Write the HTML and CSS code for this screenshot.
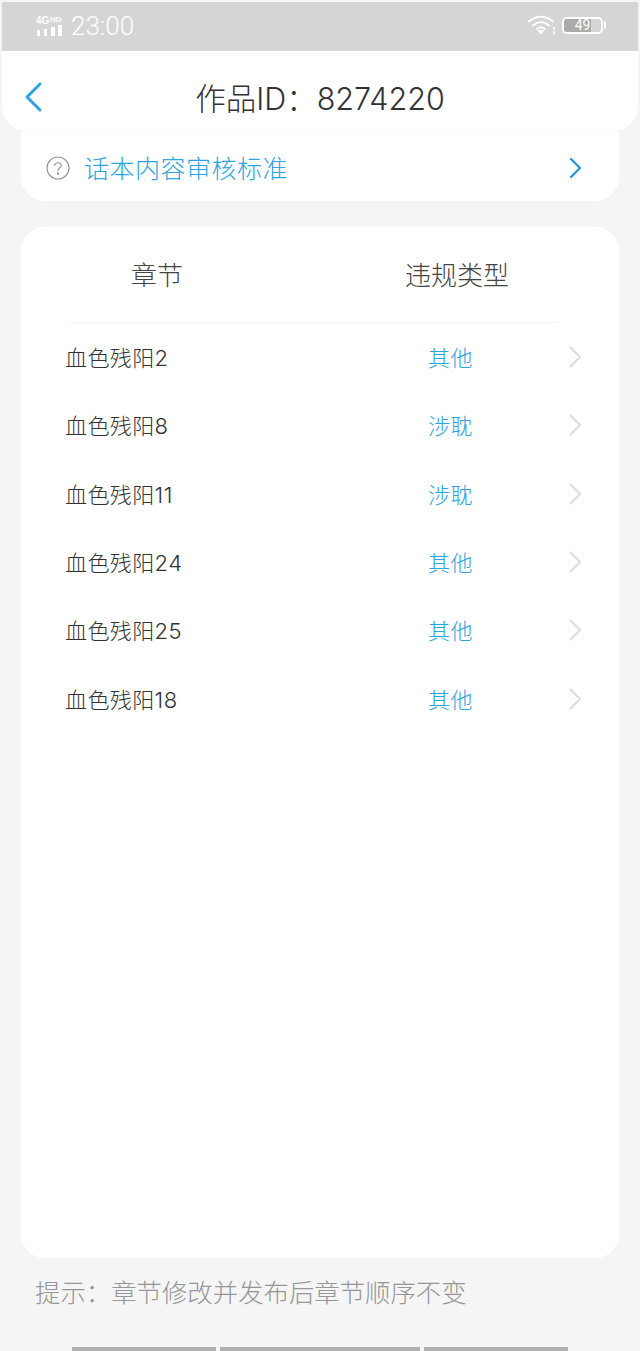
FILE: index.html
```html
<!DOCTYPE html>
<html lang="zh-CN">
<head>
<meta charset="utf-8">
<title>作品ID</title>
<link rel="stylesheet" href="styles.css">
</head>
<body>
<div class="screen">
  <header class="head">
    <div class="status">
      <div class="status-left">
        <svg class="signal" width="28" height="24" viewBox="0 0 28 24">
          <text x="0" y="10" class="net">4G</text>
          <text x="14" y="8" class="net small">HD</text>
          <rect x="1" y="16" width="3" height="6" fill="#fff"/>
          <rect x="8" y="15" width="3" height="7" fill="#fff"/>
          <rect x="15" y="13" width="4" height="9" fill="#fff"/>
          <rect x="22" y="11" width="4" height="11" fill="#fff"/>
        </svg>
        <span class="time">23:00</span>
      </div>
      <div class="status-right">
        <svg class="wifi" width="30" height="22" viewBox="0 0 30 22" fill="none" stroke="#fff" stroke-width="2" stroke-linecap="round">
          <path d="M2 7.5C9 1 19 1 26 7.5"/>
          <path d="M6 11.5C11 7 17 7 22 11.5"/>
          <path d="M10 15C12.5 13 15.5 13 18 15"/>
          <path d="M11.5 17L14 20L16.5 17Z" fill="#fff" stroke-width="1"/>
          <path d="M27 13.5V15.5M27 18V20" stroke-width="1.6"/>
        </svg>
        <div class="battery"><span class="level"></span><span class="pct">49</span></div>
        <span class="cap"></span>
      </div>
    </div>
    <div class="nav">
      <svg class="back" width="20" height="32" viewBox="0 0 20 32" fill="none" stroke="#2ea3e6" stroke-width="3" stroke-linecap="round" stroke-linejoin="round">
        <path d="M16 3L3 16L16 29"/>
      </svg>
      <h1 class="title">作品ID：8274220</h1>
    </div>
  </header>

  <div class="link-card">
    <svg class="help" width="24" height="24" viewBox="0 0 24 24" fill="none" stroke="#999" stroke-width="1.2">
      <circle cx="12" cy="12" r="11"/>
      <path d="M8.8 9.5C8.8 5.8 15.2 5.8 15.2 9.5C15.2 11.8 12 11.8 12 14.5" stroke-linecap="round"/>
      <circle cx="12" cy="17.5" r="0.6" fill="#999"/>
    </svg>
    <span class="link-text">话本内容审核标准</span>
    <svg class="link-arrow" width="13" height="22" viewBox="0 0 13 22" fill="none" stroke="#2b96d8" stroke-width="2.4" stroke-linecap="round" stroke-linejoin="round">
      <path d="M2 2L11 11L2 20"/>
    </svg>
  </div>

  <section class="table-card">
    <div class="table-head">
      <span class="th-chapter">章节</span>
      <span class="th-type">违规类型</span>
    </div>
    <ul class="rows">
      <li class="row"><span class="chapter">血色残阳2</span><span class="type">其他</span><svg class="chev" width="14" height="24" viewBox="0 0 14 24" fill="none" stroke="#dcdcdc" stroke-width="2"><path d="M2 2L12 12L2 22"/></svg></li>
      <li class="row"><span class="chapter">血色残阳8</span><span class="type">涉耽</span><svg class="chev" width="14" height="24" viewBox="0 0 14 24" fill="none" stroke="#dcdcdc" stroke-width="2"><path d="M2 2L12 12L2 22"/></svg></li>
      <li class="row"><span class="chapter">血色残阳11</span><span class="type">涉耽</span><svg class="chev" width="14" height="24" viewBox="0 0 14 24" fill="none" stroke="#dcdcdc" stroke-width="2"><path d="M2 2L12 12L2 22"/></svg></li>
      <li class="row"><span class="chapter">血色残阳24</span><span class="type">其他</span><svg class="chev" width="14" height="24" viewBox="0 0 14 24" fill="none" stroke="#dcdcdc" stroke-width="2"><path d="M2 2L12 12L2 22"/></svg></li>
      <li class="row"><span class="chapter">血色残阳25</span><span class="type">其他</span><svg class="chev" width="14" height="24" viewBox="0 0 14 24" fill="none" stroke="#dcdcdc" stroke-width="2"><path d="M2 2L12 12L2 22"/></svg></li>
      <li class="row"><span class="chapter">血色残阳18</span><span class="type">其他</span><svg class="chev" width="14" height="24" viewBox="0 0 14 24" fill="none" stroke="#dcdcdc" stroke-width="2"><path d="M2 2L12 12L2 22"/></svg></li>
    </ul>
  </section>

  <p class="hint">提示：章节修改并发布后章节顺序不变</p>

  <div class="bottom-bars">
    <span class="bar bar-side"></span>
    <span class="bar bar-mid"></span>
    <span class="bar bar-side"></span>
  </div>
</div>
</body>
</html>
```

FILE: styles.css
```css
* { box-sizing: border-box; }
html, body { margin: 0; padding: 0; }
body {
  background: #f5f5f5;
  font-family: Inter, "Noto Sans CJK SC", "Liberation Sans", sans-serif;
  font-weight: 300;
}
.screen {
  width: 640px;
  height: 1351px;
  overflow: hidden;
  display: flex;
  flex-direction: column;
}
.head {
  margin: 2px 2px 0 2px;
  height: 129px;
  flex: none;
  background: #fff;
  border-radius: 0 0 24px 24px;
  box-shadow: 0 1px 2px rgba(0, 0, 0, .03);
  overflow: hidden;
  position: relative;
  z-index: 1;
}
.status {
  height: 49px;
  background: #d5d5d5;
  display: flex;
  justify-content: space-between;
  align-items: center;
  padding: 0 32px 0 34px;
}
.status-left, .status-right { display: flex; align-items: center; }
.signal { margin-top: -2px; }
.net { font: 700 10px "Liberation Sans", sans-serif; fill: #fff; }
.net.small { font-size: 8px; }
.time {
  margin: -1px 0 0 7px;
  font: 300 26px/1 Roboto, sans-serif;
  color: #fff;
}
.status-right { margin-top: -3px; }
.wifi { margin-right: 5px; }
.battery {
  width: 41px;
  height: 17px;
  border: 2px solid #fff;
  border-radius: 5px;
  position: relative;
  overflow: hidden;
}
.level { display: block; width: 72%; height: 100%; background: #ababab; }
.pct {
  position: absolute;
  inset: 0;
  text-align: center;
  font: 400 14px/13px Roboto, sans-serif;
  color: #fff;
}
.cap { width: 2px; height: 8px; margin-left: 1px; background: #fff; border-radius: 0 2px 2px 0; }
.nav {
  height: 80px;
  display: flex;
  align-items: center;
  justify-content: center;
  position: relative;
}
.back { position: absolute; left: 22px; top: 30px; }
.title {
  margin: 16px 0 0 0;
  font-size: 30.5px;
  font-weight: 300;
  line-height: 40px;
  color: #333;
  white-space: nowrap;
}
.link-card {
  margin: 0 21px;
  height: 70px;
  flex: none;
  background: #fff;
  border-radius: 0 0 24px 24px;
  display: flex;
  align-items: center;
  padding: 4px 37px 0 25px;
}
.help { flex: none; }
.link-text {
  margin: 2px 0 0 14px;
  font-size: 25px;
  line-height: 34px;
  letter-spacing: .5px;
  color: #2ea3e0;
  flex: 1;
}
.table-card {
  margin: 26px 21px 0;
  height: 1031px;
  flex: none;
  background: #fff;
  border-radius: 24px;
}
.table-head {
  margin: 0 60px 0 48px;
  height: 96px;
  border-bottom: 1px solid #f5f5f5;
  display: flex;
  align-items: center;
  padding: 0 0 0 62px;
  font-size: 26px;
  line-height: 34px;
  color: #444;
}
.th-chapter { width: 274px; margin-top: 2px; }
.th-type { margin-top: 2px; white-space: nowrap; }
.rows { list-style: none; margin: 0; padding: 0; }
.row {
  height: 68.3px;
  display: flex;
  align-items: center;
  padding: 0 0 0 44px;
  font-size: 22px;
  line-height: 30px;
  letter-spacing: .4px;
}
.chapter { width: 363px; margin-top: 2px; color: #333; }
.type { width: 140px; margin-top: 2px; color: #2ea3e0; }
.chev { flex: none; }
.hint {
  margin: 17px 0 0 35px;
  font-size: 25.4px;
  line-height: 36px;
  color: #969696;
}
.bottom-bars {
  margin-top: 36px;
  padding-left: 72px;
  display: flex;
  gap: 4px;
}
.bar { height: 4px; background: #b0b0b0; }
.bar-side { width: 144px; }
.bar-mid { width: 200px; }
```
